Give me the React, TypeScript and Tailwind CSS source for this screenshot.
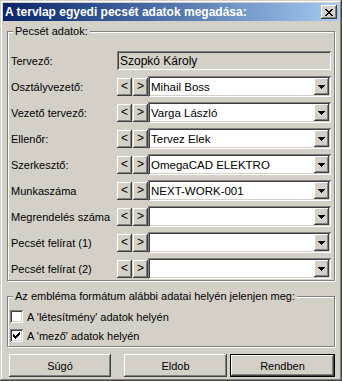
import React from "react";

const raised =
  "bg-[#d4d0c8] shadow-[inset_-1px_-1px_#404040,inset_1px_1px_#ffffff,inset_-2px_-2px_#808080,inset_2px_2px_#d4d0c8]";
const sunken =
  "shadow-[inset_1px_1px_#808080,inset_-1px_-1px_#ffffff,inset_2px_2px_#404040,inset_-2px_-2px_#d4d0c8]";

function DropArrow() {
  return (
    <svg width="7" height="4" viewBox="0 0 7 4" className="block">
      <path d="M0 0h7v1H0zM1 1h5v1H1zM2 2h3v1H2zM3 3h1v1H3z" fill="#000" />
    </svg>
  );
}

function Combo({ value }: { value: string }) {
  return (
    <div className={`flex h-[21px] w-[183px] items-center bg-white p-[2px] ${sunken}`}>
      <div className="flex-1 truncate pl-[1px] text-[11.5px] leading-[14px]">{value}</div>
      <div className={`flex h-[17px] w-[15px] items-center justify-center ${raised}`}>
        <DropArrow />
      </div>
    </div>
  );
}

function ArrowBtn({ ch }: { ch: string }) {
  return (
    <div className={`flex h-[18px] w-[15px] items-center justify-center text-[12px] leading-none ${raised}`}>
      <span className="-mt-[1px]">{ch}</span>
    </div>
  );
}

function Row({ label, value }: { label: string; value: string }) {
  return (
    <div className="flex h-[21px] items-center">
      <div className="w-[109px] whitespace-nowrap pl-[3px]">{label}</div>
      <div className="flex items-center gap-[1px]">
        <ArrowBtn ch="<" />
        <ArrowBtn ch=">" />
      </div>
      <Combo value={value} />
    </div>
  );
}

function Check({ checked }: { checked: boolean }) {
  return (
    <div className={`flex h-[13px] w-[13px] items-center justify-center bg-white ${sunken}`}>
      {checked && (
        <svg width="7" height="7" viewBox="0 0 7 7" className="block">
          <path d="M0 2h1v3H0zM1 3h1v3H1zM2 4h1v3H2zM3 3h1v3H3zM4 2h1v3H4zM5 1h1v3H5zM6 0h1v3H6z" fill="#000" />
        </svg>
      )}
    </div>
  );
}

function Button({ label, w, def }: { label: string; w: string; def?: boolean }) {
  if (def) {
    return (
      <div className={`h-[23px] ${w} border border-black`}>
        <div className={`flex h-full w-full items-center justify-center ${raised}`}>{label}</div>
      </div>
    );
  }
  return <div className={`flex h-[23px] ${w} items-center justify-center ${raised}`}>{label}</div>;
}

export default function App() {
  const rows: [string, string][] = [
    ["Osztályvezető:", "Mihail Boss"],
    ["Vezető tervező:", "Varga László"],
    ["Ellenőr:", "Tervez Elek"],
    ["Szerkesztő:", "OmegaCAD ELEKTRO"],
    ["Munkaszáma", "NEXT-WORK-001"],
    ["Megrendelés száma", ""],
    ["Pecsét felírat (1)", ""],
    ["Pecsét felírat (2)", ""],
  ];
  return (
    <div className="h-[381px] w-[342px] bg-[#d4d0c8] p-[3px] font-['Liberation_Sans',Arial,sans-serif] text-[11px] leading-[14px] text-black shadow-[inset_-1px_-1px_#404040,inset_1px_1px_#d4d0c8,inset_-2px_-2px_#808080,inset_2px_2px_#ffffff]">
      <div className="flex h-[18px] items-center bg-gradient-to-r from-[#0a246a] to-[#a6caf0] pl-[2px] pr-[2px]">
        <div className="flex-1 whitespace-nowrap text-[12px] font-bold text-white">A tervlap egyedi pecsét adatok megadása:</div>
        <div className={`flex h-[14px] w-[16px] items-center justify-center ${raised}`}>
          <svg width="8" height="7" viewBox="0 0 8 7" className="block">
            <path d="M0 0h2v1H0zM6 0h2v1H6zM1 1h2v1H1zM5 1h2v1H5zM2 2h4v1H2zM3 3h2v1H3zM2 4h4v1H2zM1 5h2v1H1zM5 5h2v1H5zM0 6h2v1H0zM6 6h2v1H6z" fill="#000" />
          </svg>
        </div>
      </div>

      <div className="px-[4px]">
        <div className="relative mt-[10px] w-[328px] border border-[#808080] pb-[1px] pt-[18px] shadow-[1px_1px_0_#ffffff,inset_1px_1px_0_#ffffff]">
          <span className="absolute left-[5px] top-[-8px] bg-[#d4d0c8] px-[2px]">Pecsét adatok:</span>
          <div className="flex flex-col gap-[5px]">
            <div className="flex h-[21px] items-center">
              <div className="w-[109px] pl-[3px]">Tervező:</div>
              <div className={`flex h-[19px] w-[214px] items-center bg-[#d4d0c8] pl-[3px] text-[12px] ${sunken}`}>Szopkó Károly</div>
            </div>
            {rows.map(([l, v]) => (
              <Row key={l} label={l} value={v} />
            ))}
          </div>
        </div>

        <div className="relative mt-[15px] w-[328px] border border-[#808080] pb-[1px] pt-[10px] shadow-[1px_1px_0_#ffffff,inset_1px_1px_0_#ffffff]">
          <span className="absolute left-[5px] top-[-8px] whitespace-nowrap bg-[#d4d0c8] px-[2px]">
            Az embléma formátum alábbi adatai helyén jelenjen meg:
          </span>
          <div className="flex h-[19px] items-center gap-[4px] pl-[2px]">
            <Check checked={false} />
            <span>A 'létesítmény' adatok helyén</span>
          </div>
          <div className="flex h-[19px] items-center gap-[4px] pl-[2px]">
            <Check checked={true} />
            <span>A 'mező' adatok helyén</span>
          </div>
        </div>

        <div className="mt-[7px] flex">
          <div className="ml-[2px]">
            <Button label="Súgó" w="w-[102px]" />
          </div>
          <div className="ml-[13px]">
            <Button label="Eldob" w="w-[103px]" />
          </div>
          <div className="ml-[3px]">
            <Button label="Rendben" w="w-[105px]" def />
          </div>
        </div>
      </div>
    </div>
  );
}
